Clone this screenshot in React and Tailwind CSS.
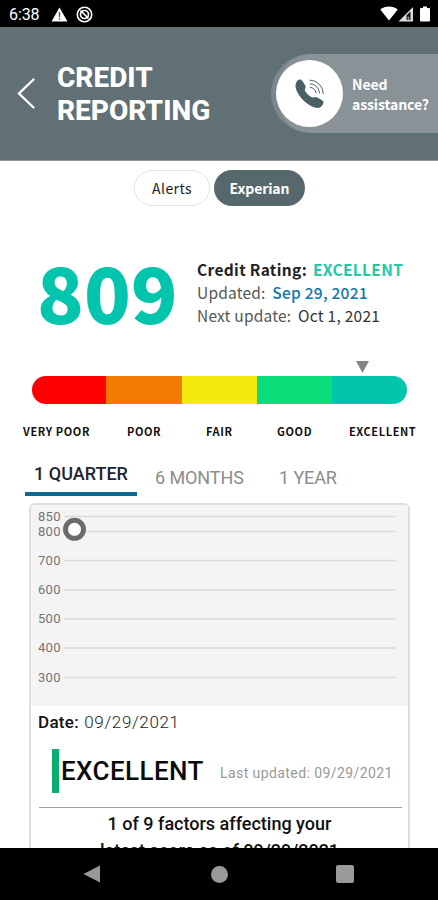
import React, { useState } from "react";

const RATINGS = [
  { label: "VERY POOR", color: "bg-[#fe0000]", width: "w-[74px]", text: "ml-[23px] w-[69px]" },
  { label: "POOR", color: "bg-[#f07b00]", width: "w-[76px]", text: "ml-[35px] w-[36px]" },
  { label: "FAIR", color: "bg-[#f4ea0e]", width: "w-[75px]", text: "ml-[43px] w-[28px]" },
  { label: "GOOD", color: "bg-[#0cdd7b]", width: "w-[75px]", text: "ml-[43px] w-[36px]" },
  { label: "EXCELLENT", color: "bg-[#03c4ad]", width: "w-[75px]", text: "ml-[36px] w-[67px]" },
];

const GRID = [
  { score: 850, y: 11.5 },
  { score: 800, y: 26.5 },
  { score: 700, y: 55.5 },
  { score: 600, y: 85 },
  { score: 500, y: 114 },
  { score: 400, y: 143 },
  { score: 300, y: 172.5 },
];

const TABS = [
  { label: "1 QUARTER", box: "w-[112px] ml-[25px]" },
  { label: "6 MONTHS", box: "w-[88px] ml-[18px]" },
  { label: "1 YEAR", box: "w-[58px] ml-[36px]" },
];

function StatusBar() {
  return (
    <div className="flex h-[27px] shrink-0 items-center bg-black pl-[9px] pr-[8px] text-white">
      <span className="w-[31px] whitespace-nowrap text-[16px] leading-none tracking-[-0.1px] mt-[2px]">6:38</span>
      <svg className="ml-[11px] mt-[1px]" width="17" height="15" viewBox="0 0 17 15">
        <path d="M8.5 0.5L16.5 14.5H0.5Z" fill="#fff" />
        <path d="M8.5 5v5M8.5 11.3v1.5" stroke="#555" strokeWidth="1.4" />
      </svg>
      <svg className="ml-[8px] mt-[1px]" width="17" height="17" viewBox="0 0 17 17" fill="none" stroke="#fff">
        <circle cx="8.5" cy="8.5" r="7.2" strokeWidth="1.6" />
        <circle cx="8.5" cy="8.5" r="4" strokeWidth="1.7" />
        <path d="M4.5 4.5l8 8" strokeWidth="1.7" />
      </svg>
      <div className="ml-auto flex items-center">
        <svg width="18" height="15" viewBox="0 0 18 15">
          <path d="M0.3 3.6C5-0.7 13-0.7 17.7 3.6L9 14.5Z" fill="#fff" />
        </svg>
        <svg width="16" height="16" viewBox="0 0 16 16">
          <path d="M0.5 15.5L15 1V15.5Z" fill="#ddd" />
          <path d="M8.5 9.5L12.5 5.5V14H8.5Z" fill="#111" />
          <path d="M9.5 10.5h1.8v3.5h-1.8z" fill="#888" />
        </svg>
        <svg className="ml-[6px]" width="10" height="16" viewBox="0 0 10 16">
          <path d="M3 0.5h4v1.5h2q1 0 1 1v11.5q0 1-1 1H1q-1 0-1-1V3q0-1 1-1h2z" fill="#fff" />
        </svg>
      </div>
    </div>
  );
}

function Header() {
  return (
    <header className="flex h-[134px] shrink-0 items-center border-b border-[#8d969c] bg-[#617074] pl-[17px] text-white">
      <svg width="18" height="31" viewBox="0 0 18 31" fill="none">
        <path d="M16.5 1.5L2 15.5L16.5 29.5" stroke="#fff" strokeWidth="2.4" strokeLinecap="round" />
      </svg>
      <h1 className="ml-[22px] w-[160px] text-[28px] leading-[33px] font-extrabold">
        CREDIT
        <br />
        REPORTING
      </h1>
      <button className="ml-auto flex h-[79px] w-[167px] shrink-0 items-center rounded-l-full border-l-[5px] border-[#7a878b] bg-[#899297] text-left">
        <span className="flex size-[67px] shrink-0 items-center justify-center rounded-full bg-white">
          <svg width="29" height="30" viewBox="0 0 29 30">
            <path
              d="M2.5 1.5C4 0 6.2 0 7.2 1.8L10.2 6.3C11 8 10.6 9 9.8 10.6C9.6 13 15 18.3 18 18.6C19.6 17.8 20.8 17.9 22.4 18.5L27.5 21.6C28.8 22.5 28.8 24 27.8 25.6C26.4 28.4 23.6 29.6 20 28.6C12 26 3.6 18.2 1 10C0 6.5 0.6 3.5 2.5 1.5Z"
              fill="#4b6065"
            />
            <g fill="none" stroke="#4b6065" strokeWidth="1" strokeLinecap="round">
              <path d="M15 1.2C22 1.4 27.8 7 28.2 14.5" />
              <path d="M15.2 4.8C20 5 24.3 9.2 24.6 14" />
              <path d="M15.4 8.4C18.2 8.6 20.9 11 21.1 13.6" />
            </g>
          </svg>
        </span>
        <span className="ml-[9px] whitespace-nowrap font-['Noto_Sans_CJK_SC',sans-serif] text-[14px] leading-[20px] font-bold tracking-[-0.1px]">
          Need
          <br />
          assistance?
        </span>
      </button>
    </header>
  );
}

function ScoreSummary() {
  return (
    <section className="mt-[52px] flex h-[76px] shrink-0 font-['Noto_Sans_CJK_SC',sans-serif]">
      <div className="-mt-[5px] ml-[37px] w-[160px] text-[77px] leading-[76px] font-black text-[#03c4ad]">809</div>
      <div className="whitespace-nowrap text-[15.5px] leading-[23px] tracking-[0.2px] text-[#555]">
        <p className="font-bold text-[#222] tracking-[0.34px]">
          Credit Rating: <span className="ml-[2px] text-[#20c9a5]">EXCELLENT</span>
        </p>
        <p>
          Updated: <span className="ml-[3px] font-medium text-[#0d78ad] tracking-[0.25px]">Sep 29, 2021</span>
        </p>
        <p>
          Next update: <span className="ml-[3px] text-[#333] tracking-[0.25px]">Oct 1, 2021</span>
        </p>
      </div>
    </section>
  );
}

function RatingBar() {
  return (
    <section className="shrink-0">
      <svg className="mt-[27px] ml-[356px]" width="13" height="12" viewBox="0 0 13 12">
        <path d="M0 0H13L6.5 12Z" fill="#858585" />
      </svg>
      <div className="ml-[32px] mt-[3px] flex h-[28px] w-[375px] overflow-hidden rounded-[14px]">
        {RATINGS.map((r) => (
          <div key={r.label} className={`${r.color} ${r.width}`} />
        ))}
      </div>
      <div className="mt-[19px] flex h-[16px] font-['Noto_Sans_CJK_SC',sans-serif] text-[11px] leading-[16px] font-bold text-[#111]">
        {RATINGS.map((r) => (
          <span key={r.label} className={`shrink-0 whitespace-nowrap tracking-[0.6px] ${r.text}`}>{r.label}</span>
        ))}
      </div>
    </section>
  );
}

function Chart() {
  return (
    <svg className="block shrink-0 bg-[#f4f4f4]" width="377" height="201" viewBox="0 0 377 201">
      {GRID.map((g) => (
        <g key={g.score}>
          <text x="7" y={g.y + 4} fontSize="13" fill="#757575" letterSpacing="0.3">{g.score}</text>
          <path d={`M33 ${g.y}H365`} stroke="#dadada" strokeWidth="1.4" />
        </g>
      ))}
      <circle cx="43.5" cy="24.3" r="9" fill="#fff" stroke="#6b6b6b" strokeWidth="5" />
    </svg>
  );
}

export default function App() {
  const [period, setPeriod] = useState("1 QUARTER");

  return (
    <div className="flex h-[900px] w-[438px] flex-col overflow-hidden bg-white font-[Roboto,sans-serif]">
      <StatusBar />
      <Header />

      <main className="flex h-[687px] shrink-0 flex-col overflow-hidden">
        {/* Bureau switch */}
        <div className="mt-[9px] ml-[134px] flex h-[36px] shrink-0 gap-[4px] font-['Noto_Sans_CJK_SC',sans-serif]">
          <button className="w-[76px] rounded-full border border-[#e4e4e4] text-[14px] text-[#222] tracking-[0.4px]">Alerts</button>
          <button className="w-[91px] rounded-full bg-[#57686c] text-[14px] font-bold tracking-[-0.1px] text-white">Experian</button>
        </div>

        <ScoreSummary />
        <RatingBar />

        {/* Period tabs */}
        <div className="mt-[17px] flex h-[40px] shrink-0 text-[18px]">
          {TABS.map((t) => (
            <button
              key={t.label}
              onClick={() => setPeriod(t.label)}
              className={`shrink-0 whitespace-nowrap ${t.box} ${
                period === t.label
                  ? "border-b-4 border-[#0b6a94] pb-[1px] font-medium text-[#1c2430]"
                  : "pt-[3px] text-left text-[#8c8c8c] tracking-[-0.1px]"
              }`}
            >
              {t.label}
            </button>
          ))}
        </div>

        {/* Score history */}
        <section className="mt-[7px] ml-[29px] flex h-[400px] w-[381px] shrink-0 flex-col overflow-hidden rounded-[6px] border-2 border-[#dedede]">
          <Chart />
          <p className="mt-[6px] ml-[7px] h-[20px] shrink-0 text-[17px] leading-[20px] text-[#333]">
            <span className="font-medium text-[#111] tracking-[0.3px]">Date:</span>{" "}
            <span className="ml-[1px] font-light text-[#222] tracking-[0.65px]">09/29/2021</span>
          </p>
          <div className="mt-[17px] ml-[21px] flex h-[44px] shrink-0 items-center whitespace-nowrap">
            <div className="h-full w-[7px] bg-[#0cae70]" />
            <span className="ml-[2px] w-[159px] text-[26px] font-medium tracking-[0.4px] text-[#0a0a0a]">EXCELLENT</span>
            <span className="mt-[4px] text-[14px] tracking-[0.42px] text-[#999]">Last updated: 09/29/2021</span>
          </div>
          <div className="mt-[14px] ml-[8px] mr-[6px] h-px shrink-0 bg-[#a0a0a0]" />
          <p className="mt-[2px] shrink-0 text-center text-[18px] leading-[27px] font-medium text-[#111]">
            1 of 9 factors affecting your
            <br />
            latest score as of 09/29/2021
          </p>
        </section>
      </main>

      <nav className="flex h-[52px] shrink-0 items-center bg-black">
        <svg className="ml-[83px]" width="18" height="18" viewBox="0 0 18 18">
          <path d="M0.5 9L17 0.5V17.5Z" fill="#999" />
        </svg>
        <div className="ml-[110px] size-[17px] rounded-full bg-[#999]" />
        <div className="ml-[108px] size-[18px] rounded-[2px] bg-[#999]" />
      </nav>
    </div>
  );
}
